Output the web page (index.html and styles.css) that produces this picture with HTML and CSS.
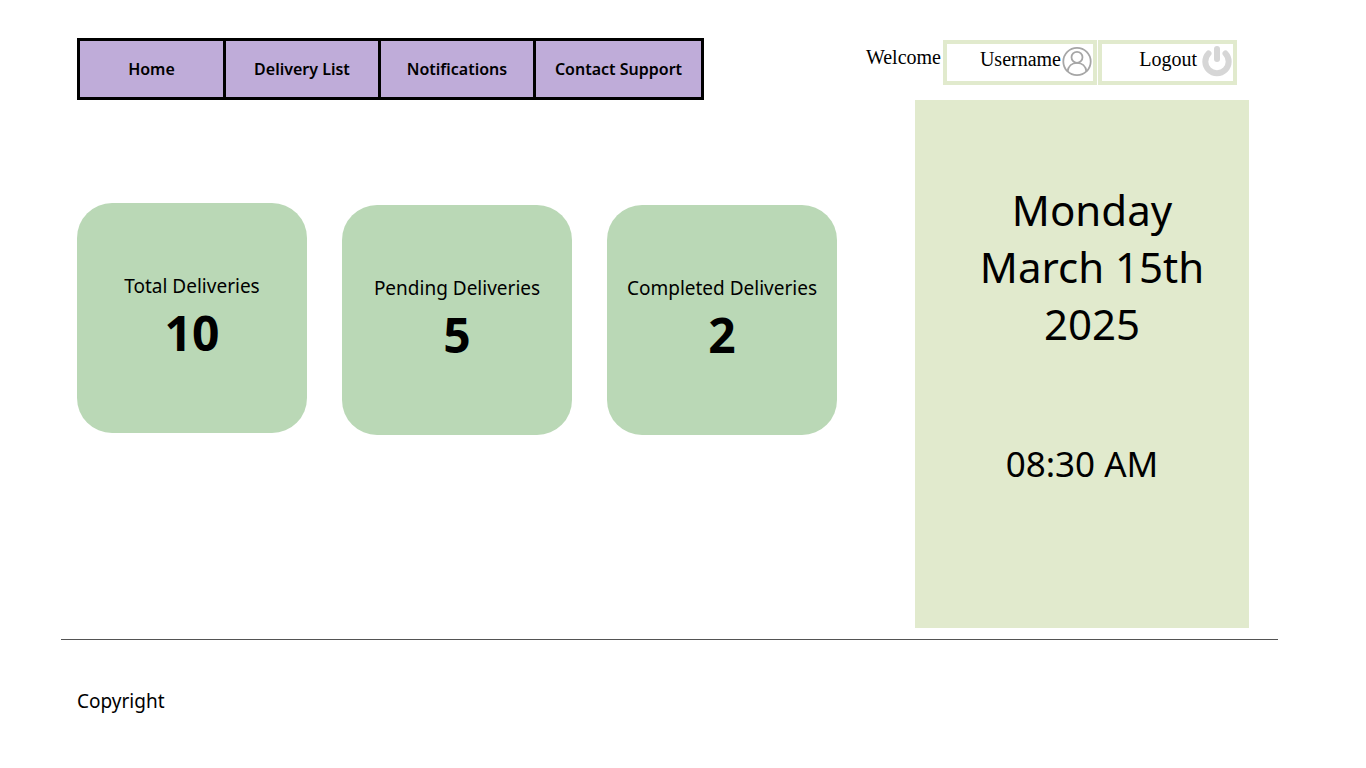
FILE: index.html
```html
<!DOCTYPE html>
<html lang="en">
<head>
  <meta charset="utf-8">
  <meta name="viewport" content="width=device-width, initial-scale=1">
  <title>Delivery Dashboard</title>
  <link rel="stylesheet" href="styles.css">
</head>
<body>
  <div class="page">
    <div class="content">
      <header class="topbar">
        <nav class="nav" aria-label="Main">
          <a class="nav-link" href="#home">Home</a>
          <a class="nav-link" href="#deliveries">Delivery List</a>
          <a class="nav-link" href="#notifications">Notifications</a>
          <a class="nav-link" href="#support">Contact Support</a>
        </nav>
        <div class="account">
          <span class="welcome">Welcome</span>
          <button class="account-button account-user" type="button">
            <span>Username</span>
            <svg class="icon" viewBox="0 0 30 30" fill="none" stroke="#a6a6a6" stroke-width="1.8" aria-hidden="true">
              <circle cx="15" cy="14.500" r="13.700"/>
              <circle cx="15" cy="10.300" r="5.500"/>
              <path d="M5.600 24.500C6.200 19 10 15.800 15 15.800S23.800 19 24.400 24.500"/>
            </svg>
          </button>
          <button class="account-button account-logout" type="button">
            <span>Logout</span>
            <svg class="icon" viewBox="0 0 30 30" fill="none" stroke="#d6d6d6" stroke-linecap="round" stroke-width="6" aria-hidden="true">
              <path d="M15 2V12"/>
              <path d="M6.500 6.500A11.700 11.700 0 1 0 23.500 6.500"/>
            </svg>
          </button>
        </div>
      </header>
      <div class="columns">
        <main class="cards">
          <section class="card">
            <h2 class="card-title">Total Deliveries</h2>
            <p class="card-value">10</p>
          </section>
          <section class="card card-lower">
            <h2 class="card-title">Pending Deliveries</h2>
            <p class="card-value">5</p>
          </section>
          <section class="card card-lower">
            <h2 class="card-title">Completed Deliveries</h2>
            <p class="card-value">2</p>
          </section>
        </main>
        <aside class="clock">
          <p class="date">Monday<br>March 15th<br>2025</p>
          <p class="time">08:30 AM</p>
        </aside>
      </div>
    </div>
    <footer class="footer">Copyright</footer>
  </div>
</body>
</html>
```
FILE: styles.css
```css
* {
  box-sizing: border-box;
}

body {
  margin: 0;
  background: #fff;
  color: #000;
  font-family: "Noto Sans", "Open Sans", sans-serif;
}

h2,
p {
  margin: 0;
}

.page {
  padding: 38px 88px 0 61px;
}

.content {
  padding: 0 29px 0 16px;
}

.topbar {
  display: flex;
  justify-content: space-between;
  align-items: flex-start;
  padding-right: 12px;
}

.nav {
  display: grid;
  grid-template-columns: 143fr 152fr 152fr 165fr;
  gap: 3px;
  flex: 0 1 627px;
  padding: 3px;
  background: #000;
}

.nav-link {
  display: flex;
  align-items: center;
  justify-content: center;
  min-height: 56px;
  background: #bfacd9;
  color: #000;
  font-size: 16px;
  font-weight: 600;
  text-decoration: none;
  white-space: nowrap;
}

.account {
  display: flex;
  align-items: flex-start;
  gap: 1px;
  padding-top: 2px;
  font-family: "Liberation Serif", serif;
  font-size: 20px;
  line-height: 24px;
}

.welcome {
  padding: 5px 1px 0 0;
}

.account-button {
  display: flex;
  align-items: flex-start;
  justify-content: flex-end;
  gap: 1px;
  height: 45px;
  padding: 3px 1px 0;
  border: 4px solid #e1eacd;
  background: #fff;
  color: #000;
  font: inherit;
}

.account-user {
  width: 154px;
}

.account-logout {
  gap: 5px;
  width: 139px;
}

.icon {
  flex: none;
  width: 30px;
  height: 30px;
  overflow: visible;
}

.columns {
  display: grid;
  grid-template-columns: 760fr 334fr;
  column-gap: 78px;
}

.cards {
  display: grid;
  grid-template-columns: repeat(3, 1fr);
  align-items: start;
  gap: 35px;
  padding-top: 103px;
}

.card {
  display: flex;
  flex-direction: column;
  align-items: center;
  aspect-ratio: 1;
  padding-top: 70px;
  border-radius: 35px;
  background: #bad8b6;
  text-align: center;
}

.card-lower {
  margin-top: 2px;
}

.card-title {
  font-size: 19px;
  font-weight: 400;
  line-height: 26px;
  white-space: nowrap;
}

.card-value {
  font-size: 48px;
  font-weight: 700;
  line-height: 68px;
}

.clock {
  padding: 81px 0 140px;
  background: #e1eacd;
  text-align: center;
}

.date {
  padding-left: 20px;
  font-size: 42px;
  line-height: 57px;
}

.time {
  padding-top: 88px;
  font-size: 35px;
  line-height: 48px;
}

.footer {
  margin-top: 11px;
  padding: 48px 16px;
  border-top: 1px solid #545454;
  font-size: 19px;
  line-height: 26px;
}
```
